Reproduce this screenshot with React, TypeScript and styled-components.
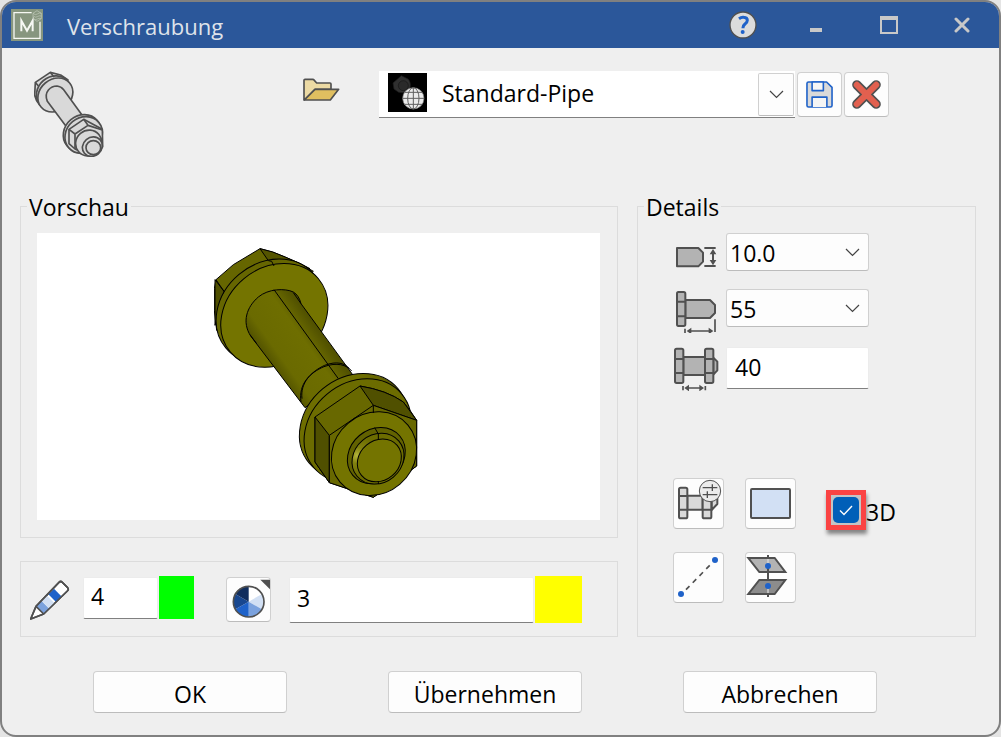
import React from "react";
import styled, { createGlobalStyle } from "styled-components";

const INK = "#505050";
const BLUE = "#1f62c9";

const GlobalStyle = createGlobalStyle`
  * { box-sizing: border-box; }
  body {
    margin: 0;
    background: #e4e4e4;
    font-family: "Open Sans", "Noto Sans", sans-serif;
    font-size: 23px;
    line-height: 30px;
    color: #000;
  }
  button, input, select { font: inherit; color: inherit; margin: 0; }
  svg { display: block; flex: none; }
`;

const Dialog = styled.form`
  display: flex;
  flex-direction: column;
  min-height: 100vh;
  border: 2px solid #808080;
  border-radius: 16px;
  background: #efefef;
  overflow: hidden;
`;

const TitleBar = styled.header`
  display: flex;
  align-items: center;
  height: 46px;
  padding: 0 1px 0 9px;
  background: #2b579a;
`;

const Title = styled.h1`
  flex: 1;
  margin: 0 0 0 24px;
  padding-top: 2px;
  font-size: 22px;
  font-weight: 400;
  line-height: 30px;
  color: #dfe3ea;
`;

const CaptionButton = styled.button`
  display: grid;
  place-items: center;
  width: 73px;
  height: 46px;
  padding: 0;
  border: 0;
  background: none;
`;

const TopRow = styled.div`
  display: flex;
  align-items: flex-start;
  padding: 23px 110px 33px 32px;
`;

const OpenButton = styled.button`
  margin: 7px 39px 0 auto;
  padding: 0;
  border: 0;
  background: none;
`;

const Template = styled.div`
  display: flex;
  flex: 0 1 510px;
  gap: 2px;
`;

const Combo = styled.div`
  display: flex;
  flex: 1;
  height: 47px;
  padding: 2px 1px 1px 9px;
  background: #fff;
  border-bottom: 1px solid #808080;
`;

const ComboSelect = styled.select`
  flex: 1;
  min-width: 0;
  padding: 0 0 4px 15px;
  border: 0;
  appearance: none;
  background: none;
`;

const ToolButton = styled.button<{ $size?: number }>`
  display: grid;
  place-items: center;
  flex: none;
  width: ${(p) => p.$size ?? 45}px;
  height: ${(p) => p.$size ?? 45}px;
  padding: 0;
  border: 1px solid #d0d0d0;
  border-bottom-color: #bcbcbc;
  border-radius: 4px;
  background: #fdfdfd;
`;

const DropButton = styled(ToolButton)`
  width: 36px;
  height: 43px;
  border-radius: 2px;
`;

const Actions = styled.div`
  display: flex;
  gap: 2px;
  padding-top: 1px;
`;

const Main = styled.main`
  display: grid;
  grid-template-columns: 598fr 339fr;
  gap: 19px;
  padding: 0 23px 0 18px;
`;

const Column = styled.div`
  display: flex;
  flex-direction: column;
  gap: 23px;
`;

const Group = styled.fieldset`
  min-width: 0;
  margin: 0;
  padding: 0;
  border: 1px solid #dcdcdc;
`;

const Legend = styled.legend`
  margin-left: 6px;
  padding: 2px 2px 0;
  line-height: 30px;
`;

const Preview = styled.div`
  display: flex;
  justify-content: center;
  margin: 11px 17px 17px 16px;
  padding: 15px 0 22px;
  background: #fff;
`;

const PenBar = styled.div`
  display: flex;
  align-items: flex-start;
  height: 76px;
  padding: 14px 35px 0 9px;
  border: 1px solid #dcdcdc;
`;

const PenCell = styled.span`
  padding-top: 4px;
`;

const TextBox = styled.input`
  width: 100%;
  min-width: 0;
  height: 42px;
  padding: 0 8px 2px;
  border: 1px solid #ececec;
  border-bottom-color: #808080;
  border-radius: 2px;
  background: #fff;
`;

const PenBox = styled(TextBox)<{ $height?: number }>`
  flex: 1;
  height: ${(p) => p.$height ?? 42}px;
  margin-top: 1px;
  padding: 0 7px 5px;
`;

const ColorField = styled.div<{ $width?: number }>`
  display: flex;
  align-items: flex-start;
  flex: ${(p) => (p.$width ? `0 0 ${p.$width}px` : "1")};
  min-width: 0;
  margin-left: 13px;
  gap: 1px;
`;

const Swatch = styled.button<{ $color: string; $width: number; $height: number }>`
  flex: none;
  width: ${(p) => p.$width}px;
  height: ${(p) => p.$height}px;
  padding: 0;
  border: 0;
  background: ${(p) => p.$color};
`;

const PaletteButton = styled(ToolButton)`
  margin: 1px 5px 0 32px;
`;

const FieldRows = styled.div`
  display: grid;
  grid-template-columns: 48px 143px;
  grid-template-rows: 56px 58px 44px;
  column-gap: 5px;
  align-items: start;
  padding: 11px 0 0 35px;
`;

const SelectBox = styled.div`
  display: grid;
  align-items: center;
  height: 38px;
  border: 1px solid #d0d0d0;
  border-bottom-color: #bcbcbc;
  border-radius: 3px;
  background: #fdfdfd;

  > * { grid-area: 1 / 1; }
  > svg { justify-self: end; margin-right: 8px; pointer-events: none; }
`;

const PlainSelect = styled.select`
  width: 100%;
  height: 36px;
  padding: 2px 32px 0 3px;
  border: 0;
  appearance: none;
  background: none;
`;

const Tools = styled.div`
  display: grid;
  grid-template-columns: 51px 51px auto;
  grid-template-rows: 51px 51px;
  justify-content: start;
  gap: 23px 21px;
  padding: 87px 0 0 35px;
`;

const CheckLabel = styled.label`
  display: flex;
  align-items: center;
  height: 40px;
  margin: 12px 0 0 9px;
`;

const CheckText = styled.span`
  padding-top: 4px;
`;

const Highlight = styled.span`
  display: grid;
  place-items: center;
  width: 40px;
  height: 40px;
  border: 5px solid #fa4343;
  background: #c4c4c4;
  box-shadow: 1px 4px 4px rgba(0, 0, 0, 0.45);

  > * { grid-area: 1 / 1; }
  > svg { pointer-events: none; }
`;

const CheckBox = styled.input`
  width: 26px;
  height: 26px;
  border-radius: 5px;
  appearance: none;
  background: #fff;
  &:checked { background: #005fb8; }
`;

const Footer = styled.footer`
  display: flex;
  justify-content: space-between;
  padding: 34px 122px 22px 91px;
`;

const PushButton = styled.button`
  width: 194px;
  height: 42px;
  padding: 3px 0 0;
  border: 1px solid #d0d0d0;
  border-bottom-color: #bcbcbc;
  border-radius: 4px;
  background: #fdfdfd;
`;

const Chevron = () => (
  <svg width="15" height="9" viewBox="0 0 15 9" fill="none" stroke="#444" strokeWidth="1.2">
    <path d="M1 1l6.5 6.5L14 1" />
  </svg>
);

const AppLogo = () => (
  <svg width="32" height="32" viewBox="0 0 96 96" fill="none" stroke="#f6f8f3">
    <rect width="96" height="96" fill="#87967f" stroke="none" />
    <path d="M62 11H9v77h78V38" strokeWidth="4" />
    <path d="M31 67V35l17 30 17-30v32" strokeWidth="6" />
    <path d="M66 13l12-8 13 8v16l-13 8-12-8zM66 13q7 7 13 2t12-2M67 21q7 6 12 2t12-2M67 29q7 5 12 1t11-1" strokeWidth="2" stroke="#c3ccbd" />
  </svg>
);

const HelpIcon = () => (
  <svg width="28" height="28" viewBox="0 0 84 84" fill="none">
    <circle cx="42" cy="42" r="39" fill="#dcdcdc" stroke={INK} strokeWidth="4" />
    <path d="M30 23q7-5 14-4 11 1 11 9 0 6-7 11-6 5-6 11v2" stroke={BLUE} strokeWidth="9" />
    <circle cx="41" cy="63" r="6" fill={BLUE} />
  </svg>
);

const BoltIcon = () => (
  <svg width="71" height="86" viewBox="103 213 213 258" fill="#d9d9d9" stroke={INK} strokeWidth="5" strokeLinejoin="round">
    <path d="M152 217L107 247L105 285Q108 302 120 315L205 240L183 225Z" />
    <ellipse cx="163" cy="279" rx="55" ry="49" transform="rotate(-40 163 279)" />
    <path d="M152 217L163 231M107 247L116 258" fill="none" />
    <ellipse cx="167" cy="285" rx="56" ry="47" transform="rotate(-40 167 285)" />
    <path d="M198 377L143 304C131 275 154 258 172 258Q184 259 192 269L247 345Z" />
    <ellipse cx="247" cy="399" rx="59" ry="52" transform="rotate(-40 247 399)" />
    <ellipse cx="252" cy="405" rx="59" ry="52" transform="rotate(-40 252 405)" />
    <path d="M208 388L252 358L308 388L309 440L292 463L272 468L226 447L208 431Z" />
    <path d="M208 388L226 402V447M226 402L265 376L308 390M265 376L252 358" fill="none" />
    <ellipse cx="267" cy="429" rx="40" ry="38" transform="rotate(-40 267 429)" />
    <ellipse cx="278" cy="440" rx="31" ry="28" transform="rotate(-40 278 440)" />
    <ellipse cx="281" cy="443" rx="22" ry="21" />
  </svg>
);

const FolderIcon = () => (
  <svg width="37" height="24" viewBox="0 0 111 72" stroke={INK} strokeWidth="5" strokeLinejoin="round">
    <path d="M3 66V7q0-3 3-3H29q3 0 5 3l7 8H81q3 0 3 3V34H36L4 66Z" fill="#ecdaa4" />
    <path d="M4 66L36 34H107L82 66Z" fill="#e0bf60" />
  </svg>
);

const TemplateThumb = () => (
  <svg width="39" height="39" viewBox="0 0 117 117" fill="none">
    <rect width="117" height="117" fill="#000" />
    <path d="M15 30L40 8L60 18Q70 28 66 45L55 60L32 58L18 48Z" fill="#303030" stroke="#1c1c1c" strokeWidth="2" />
    <circle cx="46" cy="38" r="15" fill="#2a2a2a" stroke="#161616" strokeWidth="2" />
    <circle cx="76" cy="76" r="32" fill="#ececec" stroke="#707070" strokeWidth="2" />
    <path d="M76 44V108M44 76H108M50 58H102M50 94H102" stroke="#606060" strokeWidth="3" />
    <ellipse cx="76" cy="76" rx="17" ry="32" stroke="#606060" strokeWidth="3" />
  </svg>
);

const SaveIcon = () => (
  <svg width="27" height="27" viewBox="0 0 84 84" stroke={BLUE} strokeWidth="5" strokeLinejoin="round">
    <path d="M8 3H64L81 20V76Q81 81 76 81H8Q3 81 3 76V8Q3 3 8 3Z" fill="#d9d9d9" />
    <path d="M19 3H54V30H19ZM19 81V50H65V81" fill="#f5f5f5" />
  </svg>
);

const DeleteIcon = () => (
  <svg width="29" height="29" viewBox="0 0 90 90" fill="none" strokeLinecap="round">
    <path d="M15 15L75 75M75 15L15 75" stroke={INK} strokeWidth="29" />
    <path d="M15 15L75 75M75 15L15 75" stroke="#e2604f" strokeWidth="19" />
  </svg>
);

const BoltModel = () => (
  <svg width="210" height="250" viewBox="42 38 630 750" fill="#747400" stroke="#000" strokeWidth="3" strokeLinejoin="round">
    <defs>
      <linearGradient id="shaft" gradientUnits="userSpaceOnUse" x1="225" y1="400" x2="365" y2="300">
        <stop offset="0" stopColor="#545400" />
        <stop offset="0.2" stopColor="#6a6a00" />
        <stop offset="0.7" stopColor="#6e6e00" />
        <stop offset="1" stopColor="#525200" />
      </linearGradient>
      <linearGradient id="rim" x1="0" y1="0" x2="1" y2="1">
        <stop offset="0" stopColor="#6e6e00" />
        <stop offset="0.5" stopColor="#6e6e00" />
        <stop offset="1" stopColor="#454500" />
      </linearGradient>
      <radialGradient id="tip" gradientUnits="userSpaceOnUse" cx="492" cy="622" r="60">
        <stop offset="0" stopColor="#b4b43c" />
        <stop offset="0.4" stopColor="#828210" />
        <stop offset="1" stopColor="#6c6c00" />
      </radialGradient>
    </defs>
    <path d="M180 40L100 88L48 133L43 160V225L50 285L200 240L340 108Q300 82 218 50Z" fill="#666600" />
    <path d="M180 40L205 76L330 100Q290 78 218 50Z" fill="#545400" />
    <path d="M45 133V270L72 168Z" fill="#505000" />
    <ellipse cx="209" cy="227" rx="172" ry="143" transform="rotate(-40 209 227)" fill="#666600" />
    <ellipse cx="223" cy="240" rx="172" ry="143" transform="rotate(-40 223 240)" />
    <path d="M205 76L215 78L222 92M48 133L72 168" fill="none" />
    <path d="M315 517L152 302C125 260 140 215 175 185C205 160 255 158 280 170Q297 180 303 205L458 418Z" fill="url(#shaft)" />
    <path d="M222 163L415 430M303 205L280 172M150 298L170 325" fill="none" />
    <path d="M303 500C295 445 330 412 372 394C410 380 440 388 455 407M306 490C300 443 334 408 374 390C410 376 436 384 448 400" fill="none" />
    <ellipse cx="461" cy="572" rx="174" ry="145" transform="rotate(-40 461 572)" fill="url(#rim)" />
    <ellipse cx="473" cy="586" rx="172" ry="143" transform="rotate(-40 473 586)" fill="#6c6c00" />
    <path d="M480 452L345 545V680L388 742L520 786L650 692V555L632 528L610 500Q560 465 480 452Z" fill="#686800" />
    <path d="M480 452L520 510L650 555L610 500Q560 465 480 452Z" fill="#505000" />
    <path d="M345 545L388 600V742L345 680Z" fill="#505000" />
    <path d="M388 600L520 510L650 555V692L520 786L388 742Z" fill="#686800" />
    <ellipse cx="522" cy="655" rx="133" ry="120" transform="rotate(-40 522 655)" />
    <path d="M520 510V533" fill="none" />
    <ellipse cx="529" cy="661" rx="92" ry="79" transform="rotate(-40 529 661)" fill="#626200" />
    <ellipse cx="534" cy="670" rx="82" ry="72" transform="rotate(-40 534 670)" fill="url(#tip)" />
    <ellipse cx="538" cy="675" rx="70" ry="60" transform="rotate(-40 538 675)" />
    <path d="M524 577L535 596V612M535 737V746" fill="none" />
  </svg>
);

const PencilIcon = () => (
  <svg width="40" height="40" viewBox="60 88 120 120" stroke={INK} strokeWidth="5" strokeLinejoin="round">
    <path d="M78 167L147 95Q152 90 157 95L173 111Q177 116 172 121L101 190L62 205Z" fill="#fff" />
    <g stroke="none">
      <path d="M79 168L95 151L118 174L101 190Z" fill="#7ba2de" />
      <path d="M95 151L111 135L134 158L118 174Z" fill="#d2e0f4" />
      <path d="M115 131L132 114L154 137L138 154Z" fill={BLUE} />
    </g>
    <path d="M78 167L147 95Q152 90 157 95L173 111Q177 116 172 121L101 190L62 205ZL101 190" fill="none" />
  </svg>
);

const PaletteIcon = () => (
  <svg width="43" height="43" viewBox="652 85 129 129">
    <g transform="translate(717 156)">
      <path d="M0 0V-46A46 46 0 0 1 40 -23Z" fill="#fff" />
      <path d="M0 0L40 -23A46 46 0 0 1 40 23Z" fill="#d2e0f4" />
      <path d="M0 0L40 23A46 46 0 0 1 0 46Z" fill="#7ba2de" />
      <path d="M0 0V46A46 46 0 0 1 -40 23Z" fill={BLUE} />
      <path d="M0 0L-40 23A46 46 0 0 1 -40 -23Z" fill="#18478f" />
      <path d="M0 0L-40 -23A46 46 0 0 1 0 -46Z" fill="#112e5e" />
      <circle r="46" fill="none" stroke={INK} strokeWidth="5" />
    </g>
    <path d="M752 90H783V121Z" fill={INK} />
  </svg>
);

const DiameterIcon = () => (
  <svg width="48" height="44" viewBox="129 129 144 132" fill="#b3b3b3" stroke={INK} strokeWidth="6" strokeLinejoin="round">
    <path d="M141 174H205L219 188V215L205 229H141Z" />
    <path d="M223 174H257M223 228H257M249 188V214" fill="none" />
    <path d="M249 177L259 193H239ZM249 226L259 210H239Z" fill={INK} stroke="none" />
  </svg>
);

const LengthIcon = () => (
  <svg width="48" height="44" viewBox="129 297 144 132" fill="#b3b3b3" stroke={INK} strokeWidth="6" strokeLinejoin="round">
    <path d="M166 330H240L255 345V369L240 384H166Z" />
    <path d="M145 306H161Q166 306 166 311V403Q166 408 161 408H145Q141 408 141 403V311Q141 306 145 306ZM141 335H166M141 379H166" />
    <path d="M255 388V426M165 416V429M178 423H243" fill="none" strokeWidth="5" />
    <path d="M170 423L184 413V433ZM250 423L236 413V433Z" fill={INK} stroke="none" />
  </svg>
);

const ClampIcon = () => (
  <svg width="48" height="44" viewBox="129 471 144 132" fill="#b3b3b3" stroke={INK} strokeWidth="6" strokeLinejoin="round">
    <path d="M250 503L262 515V541L250 554ZM160 501H226V555H160Z" />
    <path d="M140 476H155Q160 476 160 481V574Q160 579 155 579H140Q135 579 135 574V481Q135 476 140 476ZM135 507H160M135 549H160" />
    <path d="M230 476H245Q250 476 250 481V574Q250 579 245 579H230Q225 579 225 574V481Q225 476 230 476ZM225 507H250M225 549H250" />
    <path d="M159 588V601M226 588V601M174 594H211" fill="none" strokeWidth="5" />
    <path d="M163 594L177 584V604ZM222 594L208 584V604Z" fill={INK} stroke="none" />
  </svg>
);

const BoltSettingsIcon = () => (
  <svg width="49" height="49" viewBox="42 42 147 147" fill="#d9d9d9" stroke={INK} strokeWidth="6" strokeLinejoin="round">
    <path d="M155 98H172V117L155 135ZM82 92H128V134H82Z" />
    <path d="M62 68H77Q82 68 82 73V155Q82 160 77 160H62Q57 160 57 155V73Q57 68 62 68ZM57 93H82M57 134H82" />
    <path d="M128 95H154V155Q154 160 149 160H133Q128 160 128 155ZM128 134H154" />
    <circle cx="150" cy="78" r="32" fill="#ececec" strokeWidth="3" />
    <path d="M128 68H172M128 89H172M157 58V78M142 79V99" strokeWidth="4" />
  </svg>
);

const RectIcon = () => (
  <svg width="41" height="31" viewBox="0 0 41 31">
    <rect x="1" y="1" width="39" height="29" rx="1" fill="#d2e0f4" stroke={INK} strokeWidth="2" />
  </svg>
);

const LineIcon = () => (
  <svg width="49" height="49" viewBox="42 264 147 147">
    <path d="M78 374L153 297" stroke={INK} strokeWidth="5" strokeDasharray="15 14" />
    <circle cx="63" cy="387" r="9" fill={BLUE} />
    <circle cx="165" cy="285" r="9" fill={BLUE} />
  </svg>
);

const PlanesIcon = () => (
  <svg width="49" height="49" viewBox="258 264 147 147" fill="none" stroke={INK} strokeWidth="6">
    <path d="M265 279H344L376 321H298Z" fill="#b3b3b3" />
    <path d="M298 345H376L344 387H265Z" fill="#8c8c8c" />
    <path d="M324 270V279M324 303V346M324 386V396" />
    <path d="M324 282V295M324 370V384" stroke="#d9d9d9" strokeWidth="4" />
    <circle cx="324" cy="303" r="9" fill={BLUE} stroke="none" />
    <circle cx="324" cy="363" r="9" fill={BLUE} stroke="none" />
  </svg>
);

export default function App() {
  return (
    <>
      <GlobalStyle />
      <Dialog onSubmit={(e) => e.preventDefault()}>
        <TitleBar>
          <AppLogo />
          <Title>Verschraubung</Title>
          <CaptionButton type="button" aria-label="Hilfe"><HelpIcon /></CaptionButton>
          <CaptionButton type="button" aria-label="Minimieren">
            <svg width="12" height="14" viewBox="0 0 12 14"><path d="M0 10h12v4H0z" fill="#c8c8c8" /></svg>
          </CaptionButton>
          <CaptionButton type="button" aria-label="Maximieren">
            <svg width="18" height="18" viewBox="0 0 18 18" fill="none" stroke="#c8c8c8">
              <path d="M1 0V17H17V0" strokeWidth="2" /><path d="M0 2H18" strokeWidth="4" />
            </svg>
          </CaptionButton>
          <CaptionButton type="button" aria-label="Schließen">
            <svg width="16" height="16" viewBox="0 0 16 16" stroke="#c8c8c8" strokeWidth="3" strokeLinecap="round">
              <path d="M2 2L14 14M14 2L2 14" />
            </svg>
          </CaptionButton>
        </TitleBar>

        <TopRow>
          <BoltIcon />
          <OpenButton type="button" aria-label="Öffnen"><FolderIcon /></OpenButton>
          <Template>
            <Combo>
              <TemplateThumb />
              <ComboSelect aria-label="Vorlage" defaultValue="Standard-Pipe">
                <option>Standard-Pipe</option>
              </ComboSelect>
              <DropButton type="button" aria-label="Liste öffnen"><Chevron /></DropButton>
            </Combo>
            <Actions>
              <ToolButton type="button" aria-label="Speichern"><SaveIcon /></ToolButton>
              <ToolButton type="button" aria-label="Löschen"><DeleteIcon /></ToolButton>
            </Actions>
          </Template>
        </TopRow>

        <Main>
          <Column>
            <Group>
              <Legend>Vorschau</Legend>
              <Preview><BoltModel /></Preview>
            </Group>
            <PenBar>
              <PenCell><PencilIcon /></PenCell>
              <ColorField $width={111}>
                <PenBox aria-label="Stift" defaultValue="4" />
                <Swatch type="button" aria-label="Stiftfarbe" $color="#00ff00" $width={35} $height={43} />
              </ColorField>
              <PaletteButton type="button" aria-label="Farbpalette"><PaletteIcon /></PaletteButton>
              <ColorField>
                <PenBox aria-label="Farbe" defaultValue="3" $height={46} />
                <Swatch type="button" aria-label="Füllfarbe" $color="#ffff00" $width={47} $height={47} />
              </ColorField>
            </PenBar>
          </Column>

          <Group>
            <Legend>Details</Legend>
            <FieldRows>
              <DiameterIcon />
              <SelectBox>
                <PlainSelect aria-label="Durchmesser" defaultValue="10.0"><option>10.0</option></PlainSelect>
                <Chevron />
              </SelectBox>
              <LengthIcon />
              <SelectBox>
                <PlainSelect aria-label="Länge" defaultValue="55"><option>55</option></PlainSelect>
                <Chevron />
              </SelectBox>
              <ClampIcon />
              <TextBox aria-label="Klemmlänge" defaultValue="40" />
            </FieldRows>
            <Tools>
              <ToolButton type="button" $size={51} aria-label="Einstellungen"><BoltSettingsIcon /></ToolButton>
              <ToolButton type="button" $size={51} aria-label="Rechteck"><RectIcon /></ToolButton>
              <CheckLabel>
                <Highlight>
                  <CheckBox type="checkbox" defaultChecked />
                  <svg width="14" height="11" viewBox="0 0 14 11" fill="none" stroke="#fff" strokeWidth="1.4">
                    <path d="M1 5.5L5 9.5L13 1" />
                  </svg>
                </Highlight>
                <CheckText>3D</CheckText>
              </CheckLabel>
              <ToolButton type="button" $size={51} aria-label="Achse"><LineIcon /></ToolButton>
              <ToolButton type="button" $size={51} aria-label="Ebenen"><PlanesIcon /></ToolButton>
            </Tools>
          </Group>
        </Main>

        <Footer>
          <PushButton type="submit">OK</PushButton>
          <PushButton type="button">Übernehmen</PushButton>
          <PushButton type="button">Abbrechen</PushButton>
        </Footer>
      </Dialog>
    </>
  );
}
